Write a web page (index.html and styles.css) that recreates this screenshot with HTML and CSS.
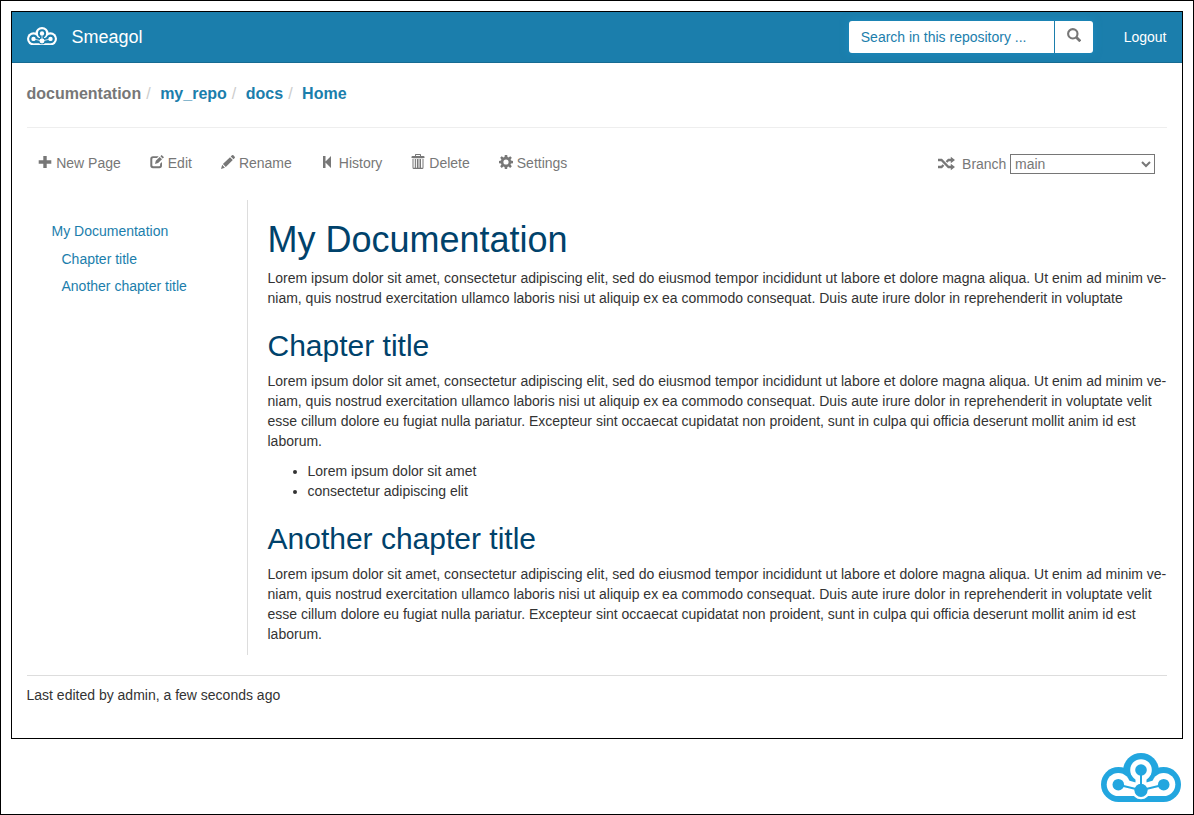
FILE: index.html
```html
<!DOCTYPE html>
<html lang="en">
<head>
<meta charset="utf-8">
<title>Smeagol</title>
<link rel="stylesheet" href="styles.css">
</head>
<body>
<svg class="defs" width="0" height="0">
  <symbol id="cloud" viewBox="0 0 80 49">
    <g fill="currentColor"><circle cx="17.5" cy="31.5" r="17.5"/><circle cx="62.5" cy="31.5" r="17.5"/><circle cx="40" cy="18" r="18"/><path d="M17.5 30h45v19h-45z"/></g>
    <g class="cloud-inner"><circle cx="17.3" cy="31.5" r="11.6"/><circle cx="62.7" cy="31.5" r="11.6"/><circle cx="40" cy="17" r="10.8"/><circle cx="40" cy="37.3" r="9"/><path d="M34.500 20h11v16h-11zM19 25l21 6 21-6 1.700 18H17.300z"/></g>
    <path d="M40 17v20M17.300 31.700 40 37.300l22.700-5.600" stroke="currentColor" stroke-width="2" fill="none"/>
    <g fill="currentColor"><circle cx="17.300" cy="31.700" r="5.800"/><circle cx="62.700" cy="31.700" r="5.800"/><circle cx="40" cy="17" r="5.800"/><circle cx="40" cy="37.300" r="6.600"/></g>
  </symbol>
</svg>
<div class="page">
  <div class="window">
    <header class="navbar">
      <svg class="brand-logo"><use href="#cloud"/></svg>
      <span class="brand">Smeagol</span>
      <form class="search">
        <input class="search-input" type="text" placeholder="Search in this repository ..." aria-label="Search">
        <button class="search-button" type="button" aria-label="Search"><svg width="14" height="14" viewBox="0 0 14 14" fill="none" stroke="currentColor"><circle cx="5.8" cy="5.8" r="4.7" stroke-width="2.1"/><path d="m9.3 9.300 4 4" stroke-width="2.700"/></svg></button>
      </form>
      <a class="logout">Logout</a>
    </header>
    <main class="container">
      <nav class="breadcrumb"><span class="muted">documentation</span><i>/</i><a>my_repo</a><i>/</i><a>docs</a><i>/</i><a>Home</a></nav>
      <div class="toolbar">
        <a class="action"><svg viewBox="0 0 14 14"><path d="M5.300 1h3.400v4.300h4.600v3.400H8.700V13H5.300V8.700H.7V5.300h4.600z"/></svg>New Page</a>
        <a class="action"><svg viewBox="0 0 14 14"><path d="M8.700 1.200 7 3H3.400Q2.300 3 2.300 4v6.200q0 1 1.100 1h5.700q1 0 1-1V8.800L12 7v3.600q0 2.600-2.600 2.600H3Q.3 13.200.3 10.600V3.800Q.3 1.200 3 1.200zM5 9l.8-3.200L9.700 1.900 12 4.200 8.100 8.100zM10.400 1.200l1.200-1.200L14 2.300 12.700 3.500z"/></svg>Edit</a>
        <a class="action"><svg viewBox="0 0 14 14"><path d="M0 14 1.200 9.800 3.900 12.700zM1.900 9.100 9 2.200l2.800 2.800-7 7zM9.700 1.500 11 .3q.7-.6 1.400 0l1.300 1.400q.6.700 0 1.300l-1.200 1.300z"/></svg>Rename</a>
        <a class="action"><svg viewBox="0 0 14 14"><path d="M2 1h2.500v5.500L10 1v12L4.500 7.500V13H2z"/></svg>History</a>
        <a class="action"><svg viewBox="0 0 14 14"><path fill-rule="evenodd" d="M4 1V-.3q0-.7.700-.7h4.600q.7 0 .7.700V1h2.500q1 0 1 1v.9H.5V2q0-1 1-1zM5 0v1h4V0zM1.500 3.700h11v8.800q0 1.500-1.300 1.500H2.800q-1.300 0-1.300-1.500zM2.500 4v8.800h1.300V4zM4.900 4v8.800h1V4zM7.500 4v8.800h1V4zM10 4v8.800h1.500V4z"/></svg>Delete</a>
        <a class="action"><svg viewBox="0 0 14 14"><path fill-rule="evenodd" d="M5.800 0h2.400l.3 2 1.100.5L11.200 1.200l1.600 1.600-1.200 1.700.4 1.100 2 .3v2.300l-2 .3-.5 1.100 1.300 1.700-1.600 1.600-1.700-1.300-1.100.5-.3 2H5.800l-.3-2-1.100-.5-1.700 1.300-1.500-1.600 1.200-1.700L2 8.500 0 8.200V5.900l2-.3.400-1.100-1.200-1.700 1.500-1.600 1.700 1.300L5.500 2zM7 4.400a2.600 2.600 0 1 0 0 5.200 2.600 2.600 0 0 0 0-5.200z"/></svg>Settings</a>
        <label class="branch"><svg class="shuffle" viewBox="0 0 17 14" fill="none" stroke="currentColor" stroke-width="2.300"><path d="M0 3h3.500l7 7H14M0 10h3.500l2-2M8.500 5l2-2H14"/><path fill="currentColor" stroke="none" d="m12.800-.3 4.200 3.300-4.200 3.300zm0 7 4.200 3.300-4.200 3.300z"/></svg>Branch
          <select class="branch-select"><option>main</option></select></label>
      </div>
      <div class="content">
        <aside class="toc"><a>My Documentation</a><a class="sub">Chapter title</a><a class="sub">Another chapter title</a></aside>
        <article class="article">
          <h1>My Documentation</h1>
          <p>Lorem ipsum dolor sit amet, consectetur adipiscing elit, sed do eiusmod tempor incididunt ut labore et dolore magna aliqua. Ut enim ad minim ve-<br>niam, quis nostrud exercitation ullamco laboris nisi ut aliquip ex ea commodo consequat. Duis aute irure dolor in reprehenderit in voluptate</p>
          <h2>Chapter title</h2>
          <p>Lorem ipsum dolor sit amet, consectetur adipiscing elit, sed do eiusmod tempor incididunt ut labore et dolore magna aliqua. Ut enim ad minim ve-<br>niam, quis nostrud exercitation ullamco laboris nisi ut aliquip ex ea commodo consequat. Duis aute irure dolor in reprehenderit in voluptate velit<br>esse cillum dolore eu fugiat nulla pariatur. Excepteur sint occaecat cupidatat non proident, sunt in culpa qui officia deserunt mollit anim id est<br>laborum.</p>
          <ul><li>Lorem ipsum dolor sit amet</li><li>consectetur adipiscing elit</li></ul>
          <h2>Another chapter title</h2>
          <p>Lorem ipsum dolor sit amet, consectetur adipiscing elit, sed do eiusmod tempor incididunt ut labore et dolore magna aliqua. Ut enim ad minim ve-<br>niam, quis nostrud exercitation ullamco laboris nisi ut aliquip ex ea commodo consequat. Duis aute irure dolor in reprehenderit in voluptate velit<br>esse cillum dolore eu fugiat nulla pariatur. Excepteur sint occaecat cupidatat non proident, sunt in culpa qui officia deserunt mollit anim id est<br>laborum.</p>
        </article>
      </div>
      <footer class="edited">Last edited by admin, a few seconds ago</footer>
    </main>
  </div>
  <svg class="corner-logo"><use href="#cloud"/></svg>
</div>
</body>
</html>
```
FILE: styles.css
```css
* { box-sizing: border-box; }
body { margin: 0; background: #fff; color: #333; font: 14px/20px "Liberation Sans", Arial, sans-serif; }
.defs { display: block; }
.page { display: flex; flex-direction: column; height: 815px; border: 1px solid #000; padding: 10px; overflow: hidden; }
.window { width: 1172px; height: 728px; border: 1px solid #000; }
.navbar { display: flex; align-items: center; height: 51px; padding: 0 15.5px 0 15px; background: #1b7eac; border-bottom: 1px solid #176b92; color: #fff; }
.brand-logo { width: 30px; height: 18.4px; margin-bottom: 2px; --inner: #1b7eac; }
.cloud-inner { fill: var(--inner); }
.brand { margin-left: 14.4px; font-size: 18px; }
.search { display: flex; width: 244px; height: 32px; margin-left: auto; border-radius: 3px; box-shadow: 0 0 8px rgba(27, 142, 196, .8); }
.search-input { width: 206px; border: 0; border-right: 1px solid #1b7eac; border-radius: 3px 0 0 3px; padding: 0 11.6px; font: inherit; background: #fff; }
.search-input::placeholder { color: #1b7eac; opacity: 1; }
.search-button { width: 38px; border: 0; border-radius: 0 3px 3px 0; background: #fff; color: #777; padding: 0 0 1px; }
.search-button svg { display: block; margin: -3px auto 0; }
.logout { margin-left: 30.5px; }
.container { padding: 0 15px 0 14.5px; }
.breadcrumb { height: 65px; border-bottom: 1px solid #eee; padding-top: 20px; font-size: 16px; line-height: 22px; font-weight: bold; color: #1b7eac; }
.breadcrumb .muted { color: #777; }
.breadcrumb i { color: #ccc; font-style: normal; font-weight: normal; padding: 0 9.5px 0 5px; }
.toolbar { display: flex; height: 72px; padding: 25px 12px 0 11.5px; color: #777; }
.action { display: flex; margin-right: 28.8px; white-space: nowrap; }
.action svg { width: 14px; height: 14px; margin: 2px 4.2px 0 0; fill: currentColor; overflow: visible; }
.branch { display: flex; align-items: center; height: 22px; margin-left: auto; }
.shuffle { width: 17px; height: 14px; margin-right: 7.4px; overflow: visible; }
.branch-select { width: 145px; height: 20px; margin-left: 3.6px; padding: 0; border: 1px solid #767676; border-radius: 0; background: #fff; color: #777; font: inherit; }
.content { display: flex; height: 455px; }
.toc { display: flex; flex-direction: column; width: 221px; border-right: 1px solid #ddd; padding: 21px 0 0 25px; gap: 7.5px; color: #1b7eac; }
.toc .sub { padding-left: 10px; }
.article { flex: 1; padding-left: 20px; white-space: nowrap; }
h1, h2 { color: #00426b; font-weight: normal; }
h1 { margin: 20px 0 9px; font-size: 36px; line-height: 39px; }
h2 { margin: 21px 0 9px; font-size: 30px; line-height: 33px; }
p { margin: 0 0 10px; }
ul { margin: 0 0 10px; padding-left: 40px; }
.edited { height: 62px; margin-top: 20px; padding-top: 9px; border-top: 1px solid #ddd; }
.corner-logo { flex: none; align-self: flex-end; width: 80px; height: 49px; margin: 14px 2px 0 0; color: #22a6df; --inner: #fff; }
```
